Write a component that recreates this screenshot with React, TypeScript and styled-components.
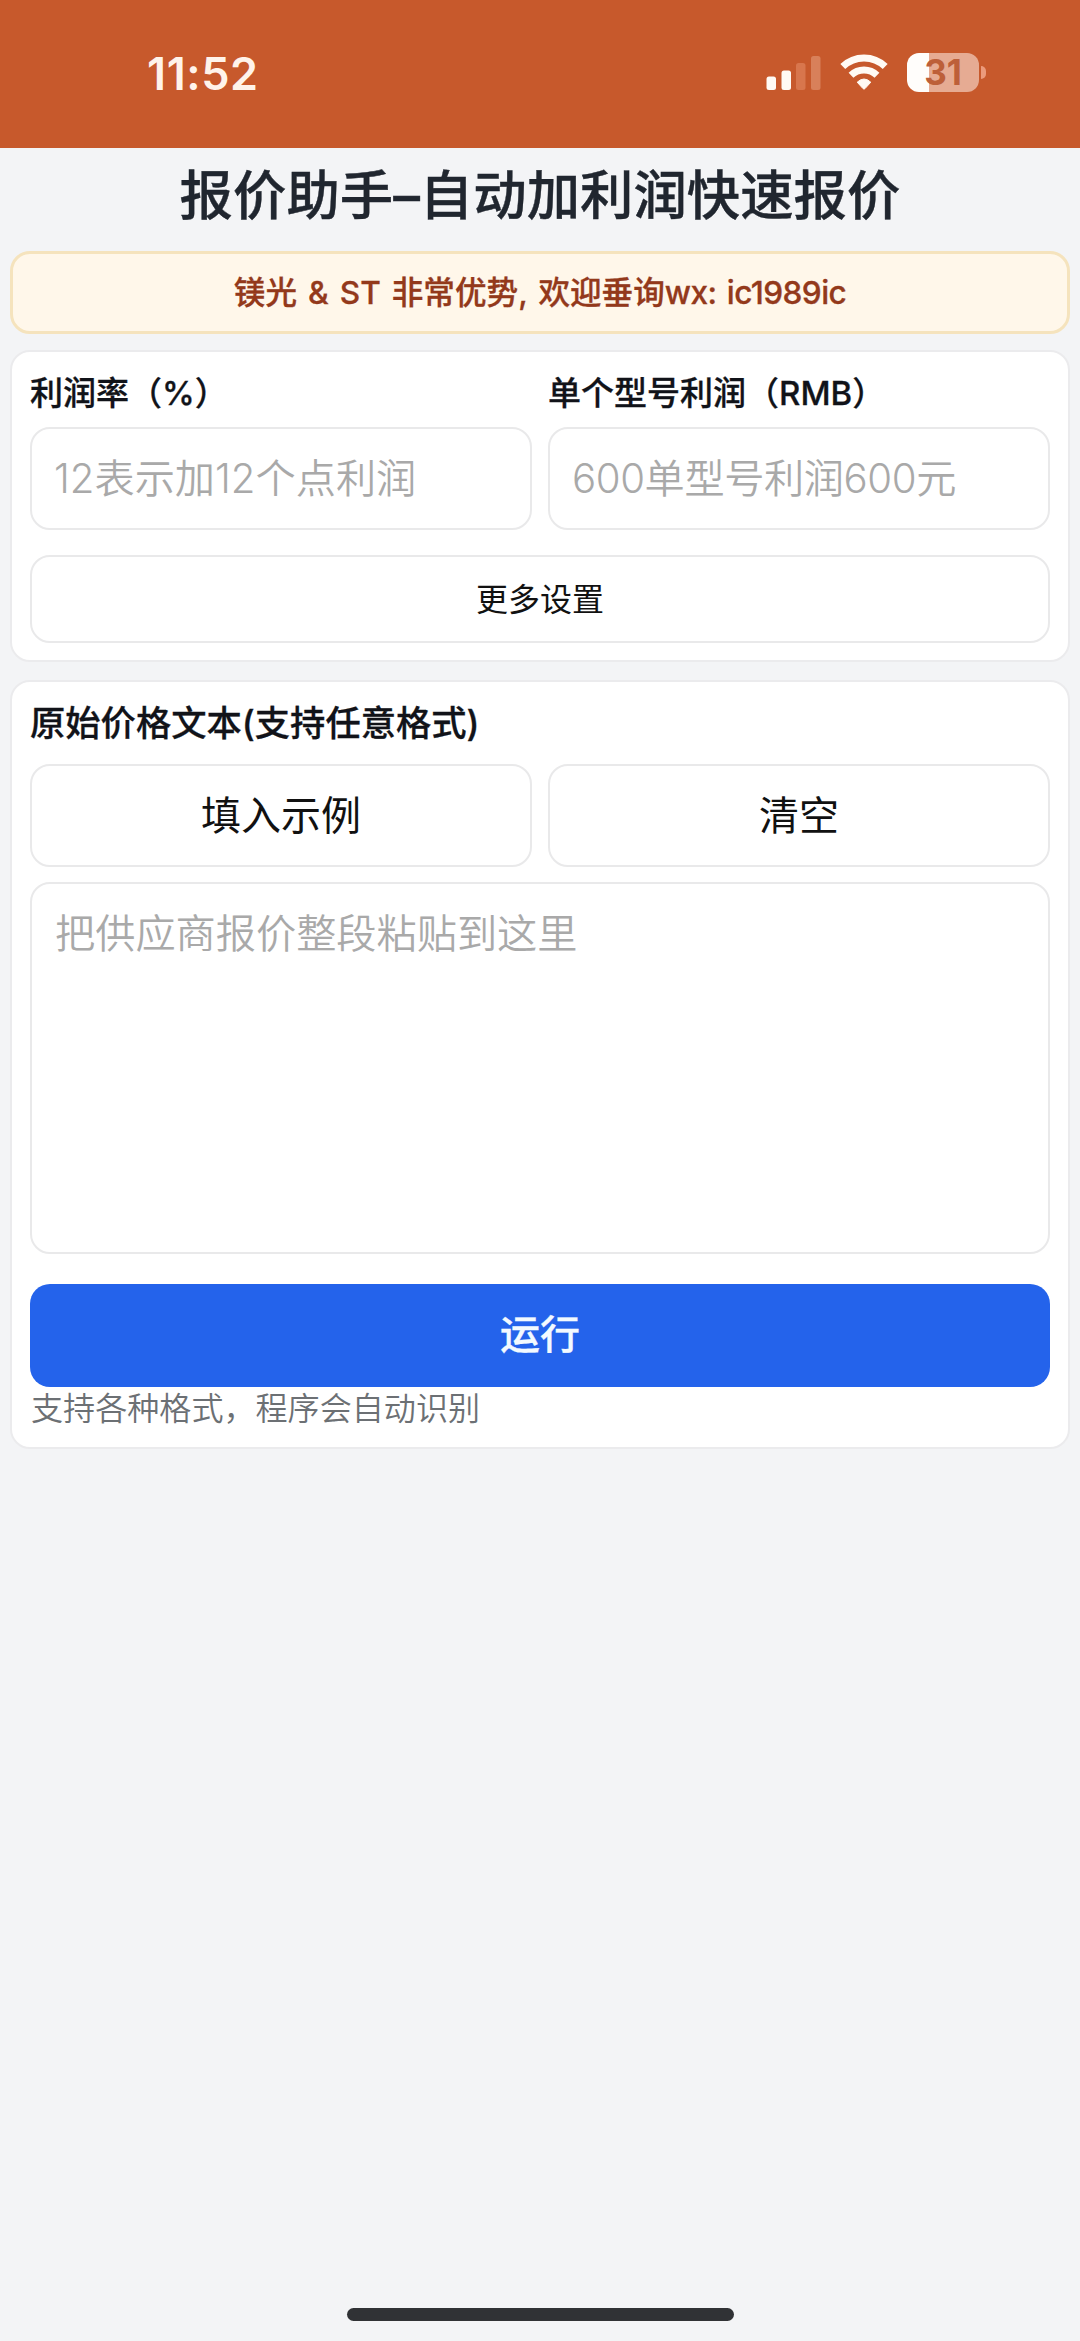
import React, { useState } from "react";
import styled, { createGlobalStyle } from "styled-components";

const GlobalStyle = createGlobalStyle`
  * { box-sizing: border-box; }
  html, body { margin: 0; padding: 0; background: #f3f4f6; }
  body, button, input, textarea {
    font-family: Inter, "Noto Sans CJK SC", sans-serif;
  }
`;

const Page = styled.div`
  width: 1080px;
  height: 2341px;
  display: flex;
  flex-direction: column;
  background: #f3f4f6;
  color: #111319;
  overflow: hidden;
`;

const StatusBar = styled.header`
  height: 148px;
  flex: none;
  display: flex;
  justify-content: space-between;
  padding: 0 94px 0 147px;
  background: #c7592c;
`;

const Clock = styled.time`
  height: 147px;
  line-height: 147px;
  font-size: 45px;
  font-weight: 600;
  letter-spacing: 0.6px;
  color: #fff3ea;
`;

const StatusIcons = styled.div`
  display: flex;
  align-items: flex-start;
  padding-top: 53px;
`;

const SignalIcon = styled.svg`
  margin: 3px 19px 0 0;
`;

const WifiIcon = styled.svg`
  margin: 1px 19px 0 0;
`;

const BatteryBody = styled.div`
  width: 72px;
  height: 39px;
  border-radius: 12px;
  background: linear-gradient(to right, #fffdfb 22px, #e6ab93 22px);
  color: #bd5f39;
  font-size: 35px;
  line-height: 39px;
  font-weight: 650;
  text-align: center;
`;

const BatteryTip = styled.div`
  width: 5px;
  height: 13px;
  margin: 13px 0 0 2px;
  border-radius: 0 6px 6px 0;
  background: #eb9a7b;
`;

const Content = styled.main`
  flex: 1;
  display: flex;
  flex-direction: column;
  padding: 0 10px;
`;

const Title = styled.h1`
  margin: 0;
  height: 103px;
  padding-top: 8px;
  line-height: 80px;
  font-size: 53.4px;
  font-weight: 500;
  text-align: center;
  white-space: nowrap;
  color: #20262f;
  -webkit-text-stroke: 0.4px #20262f;
`;

const Notice = styled.div`
  height: 83px;
  margin-bottom: 16px;
  border: 3px solid #f5e3bd;
  border-radius: 20px;
  background: #fff7ea;
  color: #93391b;
  font-size: 31.6px;
  font-weight: 500;
  line-height: 78px;
  word-spacing: 2.6px;
  text-align: center;
  white-space: nowrap;
  -webkit-text-stroke: 0.3px #93391b;
`;

const Contact = styled.span`
  letter-spacing: -0.6px;
`;

const Card = styled.section`
  margin-bottom: 18px;
  padding: 0 18px;
  border: 2px solid #ebebed;
  border-radius: 20px;
  background: #ffffff;
  display: flex;
  flex-direction: column;
`;

const Columns = styled.div`
  display: grid;
  grid-template-columns: 1fr 1fr;
  gap: 16px;
`;

const Field = styled.label`
  display: flex;
  flex-direction: column;
`;

const Caption = styled.span<{ $size: number; $height: number }>`
  height: ${(p) => p.$height}px;
  line-height: 83px;
  font-size: ${(p) => p.$size}px;
  font-weight: 500;
  white-space: nowrap;
  -webkit-text-stroke: 0.3px #111319;
`;

const NumberInput = styled.input<{ $tracking?: number }>`
  width: 100%;
  height: 103px;
  padding: 0 22px;
  border: 2px solid #e9e9ea;
  border-radius: 20px;
  background: #fff;
  font-size: 40.2px;
  font-weight: 350;
  letter-spacing: ${(p) => p.$tracking ?? 0}px;
  outline: none;
  &::placeholder { color: #a9a9a9; opacity: 1; }
`;

const PlainButton = styled.button<{ $height: number; $size: number }>`
  width: 100%;
  height: ${(p) => p.$height}px;
  padding: 1px 0 0;
  border: 2px solid #e9e9ea;
  border-radius: 20px;
  background: #fff;
  color: #111;
  font-size: ${(p) => p.$size}px;
  line-height: 60px;
`;

const SettingsRow = styled.div`
  padding: 25px 0 17px;
`;

const SourceText = styled.textarea`
  display: block;
  width: 100%;
  height: 372px;
  margin: 15px 0 30px;
  padding: 20px 23px;
  border: 2px solid #e9e9ea;
  border-radius: 20px;
  background: #fff;
  font-size: 40.2px;
  font-weight: 350;
  line-height: 60px;
  resize: none;
  outline: none;
  &::placeholder { color: #a9a9a9; opacity: 1; }
`;

const RunButton = styled.button`
  height: 103px;
  padding: 0 0 1px;
  border: 0;
  border-radius: 20px;
  background: #2463eb;
  color: #f3faff;
  font-size: 40px;
  font-weight: 500;
  line-height: 60px;
  -webkit-text-stroke: 0.3px #f3faff;
`;

const Hint = styled.p`
  margin: 0;
  height: 60px;
  padding-left: 1px;
  line-height: 44px;
  font-size: 32.1px;
  font-weight: 350;
  color: #6c7074;
`;

const HomeIndicator = styled.div`
  flex: none;
  align-self: center;
  width: 387px;
  height: 13px;
  margin-bottom: 20px;
  border-radius: 7px;
  background: #303235;
`;

const SAMPLE = "STM32F103C8T6 1000 8.5";

export default function App() {
  const [source, setSource] = useState("");
  return (
    <Page>
      <GlobalStyle />
      <StatusBar>
        <Clock>11:52</Clock>
        <StatusIcons>
          <SignalIcon width="55" height="34" viewBox="0 0 55 34">
            <rect x="0.5" y="20.5" width="9.5" height="13.5" rx="2.5" fill="#fffaf4" />
            <rect x="15.5" y="14.5" width="9.5" height="19.5" rx="2.5" fill="#fffaf4" />
            <rect x="30" y="7" width="9.5" height="27" rx="2.5" fill="#d8764d" />
            <rect x="45" y="0" width="9.5" height="34" rx="2.5" fill="#d8805a" />
          </SignalIcon>
          <WifiIcon width="48" height="36" viewBox="0 0 48 36">
            <g fill="none" stroke="#fffaf4" strokeWidth="7">
              <path d="M2.8 12.6 A30.5 30.5 0 0 1 45.2 12.6" />
              <path d="M11 21.2 A18.8 18.8 0 0 1 37 21.2" />
            </g>
            <path
              d="M17.2 28.2 Q24 21.8 30.8 28.2 L25 34.6 Q24 35.6 23 34.6 Z"
              fill="#fffaf4"
              stroke="#fffaf4"
              strokeWidth="1"
              strokeLinejoin="round"
            />
          </WifiIcon>
          <BatteryBody>31</BatteryBody>
          <BatteryTip />
        </StatusIcons>
      </StatusBar>
      <Content>
        <Title>报价助手–自动加利润快速报价</Title>
        <Notice>
          镁光 &amp; ST 非常优势, 欢迎垂询<Contact>wx: ic1989ic</Contact>
        </Notice>
        <Card>
          <Columns>
            <Field>
              <Caption $size={33} $height={75}>利润率（%）</Caption>
              <NumberInput placeholder="12表示加12个点利润" />
            </Field>
            <Field>
              <Caption $size={33} $height={75}>单个型号利润（RMB）</Caption>
              <NumberInput $tracking={-0.4} placeholder="600单型号利润600元" />
            </Field>
          </Columns>
          <SettingsRow>
            <PlainButton $height={88} $size={32}>更多设置</PlainButton>
          </SettingsRow>
        </Card>
        <Card>
          <Caption $size={35.3} $height={82}>原始价格文本(支持任意格式)</Caption>
          <Columns>
            <PlainButton $height={103} $size={40} onClick={() => setSource(SAMPLE)}>
              填入示例
            </PlainButton>
            <PlainButton $height={103} $size={40} onClick={() => setSource("")}>
              清空
            </PlainButton>
          </Columns>
          <SourceText
            placeholder="把供应商报价整段粘贴到这里"
            value={source}
            onChange={(e) => setSource(e.target.value)}
          />
          <RunButton>运行</RunButton>
          <Hint>支持各种格式，程序会自动识别</Hint>
        </Card>
      </Content>
      <HomeIndicator />
    </Page>
  );
}
